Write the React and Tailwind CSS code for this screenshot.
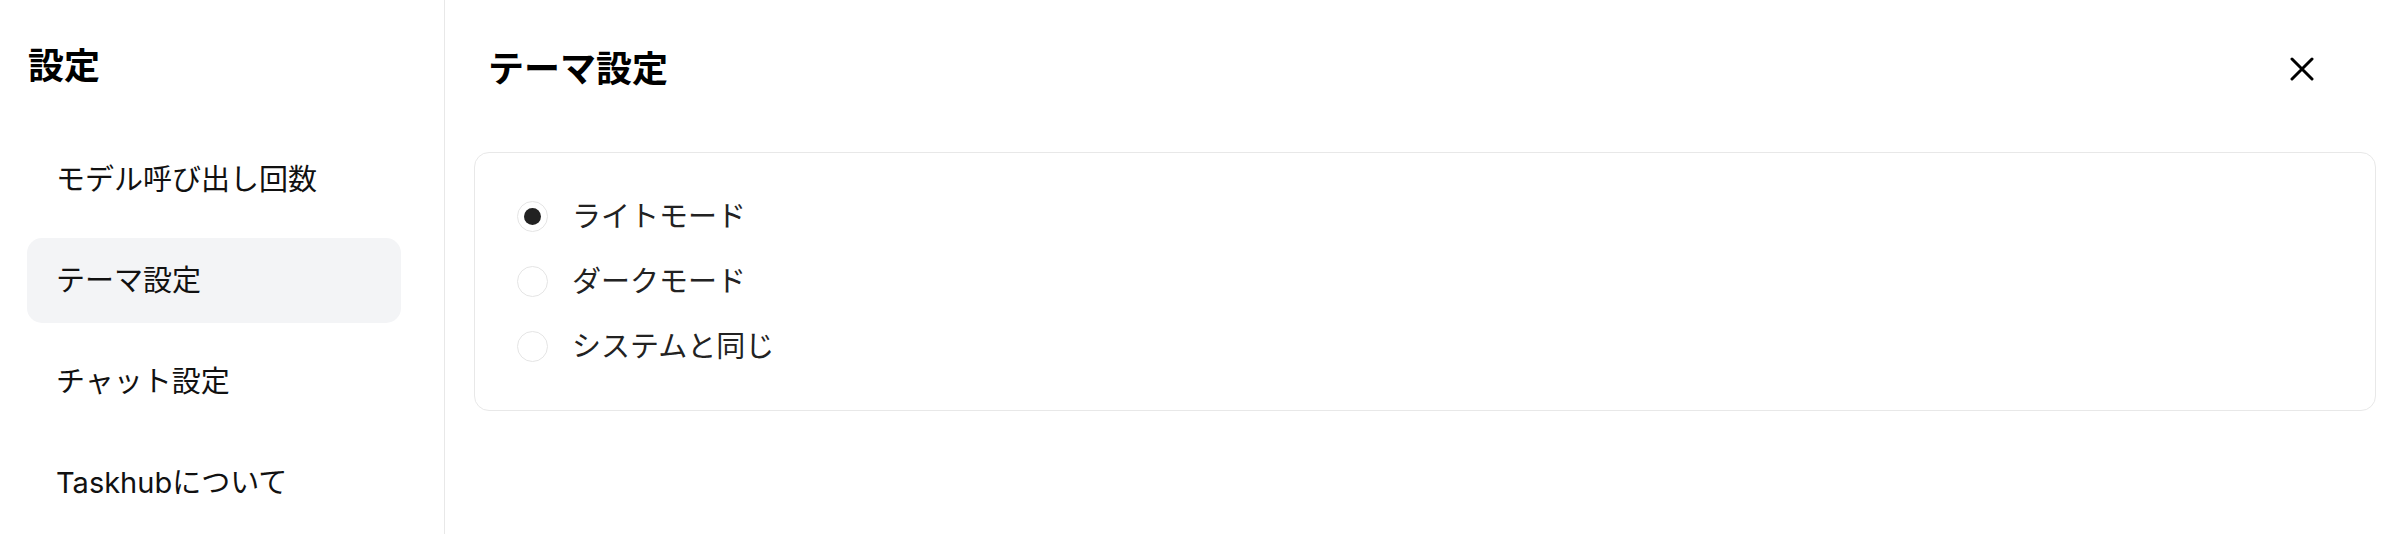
import { useState } from 'react';

const navItems = ['モデル呼び出し回数', 'テーマ設定', 'チャット設定', 'Taskhubについて'];

const themes = [
  { id: 'light', label: 'ライトモード' },
  { id: 'dark', label: 'ダークモード' },
  { id: 'system', label: 'システムと同じ' },
];

const CloseIcon = () => (
  <svg width="24" height="24" viewBox="0 0 24 24" fill="none">
    <path d="M2 2L22 22M22 2L2 22" stroke="#000" strokeWidth="3" strokeLinecap="round" />
  </svg>
);

const App = () => {
  const [active, setActive] = useState('テーマ設定');
  const [theme, setTheme] = useState('light');

  return (
    <div
      className="flex h-[534px] w-full bg-white text-black"
      style={{ fontFamily: 'Inter, "Noto Sans CJK JP", sans-serif' }}
    >
      <aside className="w-[445px] shrink-0 border-r border-[#e8e8e8] pl-[27px]">
        <div className="h-[132px] flex items-center pl-[1px]">
          <h1 className="text-[36px] font-bold leading-none">設定</h1>
        </div>
        <nav className="mt-[5px] w-[374px] flex flex-col gap-[16px]">
          {navItems.map((item) => (
            <button
              key={item}
              onClick={() => setActive(item)}
              className={`h-[85px] px-[29px] rounded-[15px] flex items-center text-left text-[29px] text-[#111] ${
                active === item ? 'bg-[#f3f4f6]' : ''
              }`}
            >
              {item}
            </button>
          ))}
        </nav>
      </aside>

      <main className="flex-1 pl-[29px] pr-[20px]">
        <div className="h-[138px] flex items-center justify-between pl-[14px] pr-[52px]">
          <h2 className="text-[36px] font-bold leading-none">テーマ設定</h2>
          <button className="w-[44px] h-[44px] flex items-center justify-center">
            <CloseIcon />
          </button>
        </div>

        <div className="mt-[14px] border border-[#e8e8e8] rounded-[15px] pt-[31px] pb-[31px] pl-[42px]">
          {themes.map((t) => (
            <label key={t.id} className="h-[65px] flex items-center gap-[24px] cursor-pointer">
              <span
                onClick={() => setTheme(t.id)}
                className="w-[31px] h-[31px] rounded-full border border-[#e5e5e5] flex items-center justify-center"
              >
                {theme === t.id && <span className="w-[17px] h-[17px] rounded-full bg-[#222]" />}
              </span>
              <span className="text-[29px] text-[#222]">{t.label}</span>
            </label>
          ))}
        </div>
      </main>
    </div>
  );
};

export default App;
